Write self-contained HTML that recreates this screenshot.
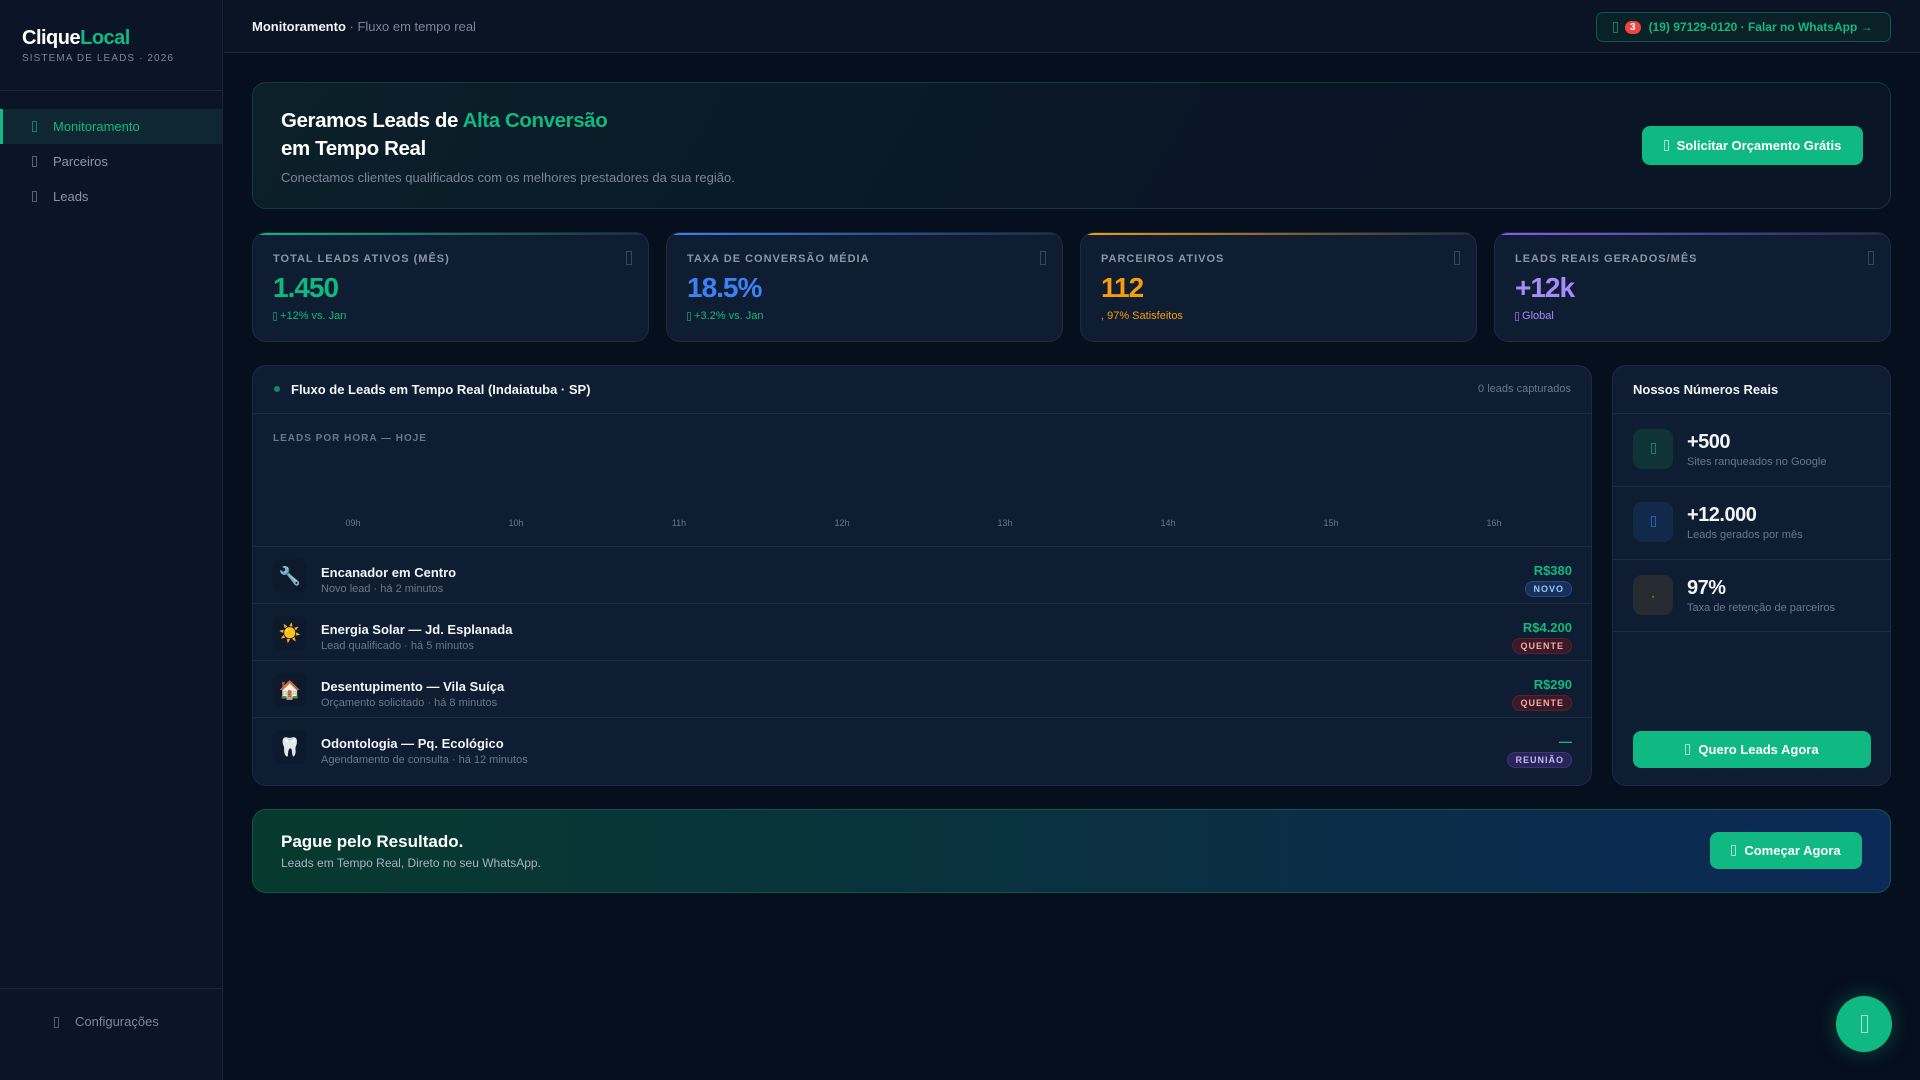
<!DOCTYPE html>
<html><head><meta charset="utf-8"><style>
*{box-sizing:border-box;margin:0;padding:0}
body{width:1920px;height:1080px;background:#060f1e;font-family:"Liberation Sans",sans-serif;color:#e5e7eb;position:relative;overflow:hidden}
.abs{position:absolute}
.tofu{display:inline-block;width:5px;height:11px;border:1px solid currentColor;opacity:.6;vertical-align:middle}
.side{left:0;top:0;width:223px;height:1080px;background:#0b1527;border-right:1px solid #1a263a}
.nav{position:absolute;left:0;width:222px;height:35px;font-size:13px;color:#8b95a7;display:flex;align-items:center}
.nav .tofu{margin-left:32px;margin-right:16px}
.card{background:#0f1d33;border:1px solid #1c2b42;border-radius:14px;position:absolute}
.stat{overflow:hidden}
.stat .lab{position:absolute;left:20px;top:20px;font-size:11px;letter-spacing:1px;color:#8b95a7;font-weight:bold}
.stat .val{position:absolute;left:20px;top:39px;font-size:28px;font-weight:bold;letter-spacing:-1px}
.stat .sub{position:absolute;left:20px;top:77px;font-size:11px}
.stat .ic{position:absolute;right:16px;top:18px;width:6px;height:14px;border:1px solid #3a4658}
.stat .bar{position:absolute;left:0;right:0;top:0;height:2px}
.row{position:absolute;left:0;width:1339px;height:57px;border-top:1px solid #1c2b42}
.row .ib{position:absolute;left:20px;top:12px;width:34px;height:34px;border-radius:8px;background:#0d1a2e;font-size:18px;text-align:center;line-height:34px}
.row .t{position:absolute;left:68px;top:18px;font-size:13px;font-weight:bold;color:#f1f5f9}
.row .s{position:absolute;left:68px;top:36px;font-size:11px;color:#6b7688}
.row .p{position:absolute;right:20px;top:16px;font-size:13px;font-weight:bold;color:#10b981}
.row .b{position:absolute;right:20px;top:34px;font-size:9px;font-weight:bold;letter-spacing:1px;padding:2px 7px;border-radius:9px}
.nr{position:absolute;left:0;width:278px;height:73px;border-top:1px solid #1c2b42}
.nr .ib{position:absolute;left:20px;top:15px;width:40px;height:40px;border-radius:9px;text-align:center;line-height:40px}
.nr .v{position:absolute;left:74px;top:17px;font-size:20px;font-weight:bold;color:#f1f5f9;letter-spacing:-.5px}
.nr .s{position:absolute;left:74px;top:42px;font-size:11px;color:#6b7688}
.hr{position:absolute;top:152px;font-size:9px;color:#6b7688;transform:translateX(-50%)}
.btn{position:absolute;background:#10b981;color:#fff;font-weight:bold;border-radius:8px;display:flex;align-items:center;justify-content:center;font-size:13px}
</style></head><body>
<div class="abs side">
 <div class="abs" style="left:22px;top:27px;font-size:20px;font-weight:bold;letter-spacing:-.5px;color:#fff">Clique<span style="color:#10b981">Local</span></div>
 <div class="abs" style="left:22px;top:53px;font-size:10px;letter-spacing:1.1px;color:#7b8597">SISTEMA DE LEADS · 2026</div>
 <div class="abs" style="left:0;top:90px;width:222px;border-top:1px solid #1a263a"></div>
 <div class="nav" style="top:109px;background:#0f2633;color:#10b981;border-left:3px solid #10b981"><span class="tofu" style="margin-left:29px"></span>Monitoramento</div>
 <div class="nav" style="top:144px"><span class="tofu"></span>Parceiros</div>
 <div class="nav" style="top:179px"><span class="tofu"></span>Leads</div>
 <div class="abs" style="left:0;top:988px;width:222px;border-top:1px solid #1a263a"></div>
 <div class="abs" style="left:54px;top:1014px;font-size:13px;color:#7b8597"><span class="tofu" style="margin-right:16px"></span>Configurações</div>
</div>
<div class="abs" style="left:224px;top:0;width:1696px;height:53px;background:#0a1425;border-bottom:1px solid #1a263a"></div>
<div class="abs" style="left:252px;top:19px;font-size:13px;color:#7b8597"><b style="color:#f1f5f9">Monitoramento</b> · Fluxo em tempo real</div>
<div class="abs" style="left:1596px;top:12px;width:295px;height:30px;border:1px solid #14574a;background:#0a2128;border-radius:7px;font-size:12px;font-weight:bold;color:#10b981;display:flex;align-items:center;padding-left:16px"><span class="tofu" style="margin-right:7px"></span><span style="background:#ef4444;color:#fff;border-radius:8px;font-size:10px;padding:1px 5px;margin-right:8px">3</span>(19) 97129-0120 · Falar no WhatsApp →</div>

<div class="abs" style="left:252px;top:82px;width:1639px;height:127px;border:1px solid #133a3c;border-radius:14px;background:linear-gradient(120deg,#0b2029,#0a1627 60%,#0a1525)"></div>
<div class="abs" style="left:281px;top:107px;font-size:20.5px;font-weight:bold;line-height:28px;color:#fff;letter-spacing:-.4px">Geramos Leads de <span style="color:#10b981">Alta Conversão</span><br>em Tempo Real</div>
<div class="abs" style="left:281px;top:170px;font-size:13px;color:#7b8597">Conectamos clientes qualificados com os melhores prestadores da sua região.</div>
<div class="btn" style="left:1642px;top:126px;width:221px;height:39px"><span class="tofu" style="margin-right:8px"></span>Solicitar Orçamento Grátis</div>

<div class="card stat" style="left:252px;top:232px;width:397px;height:110px"><div class="bar" style="background:linear-gradient(90deg,#10b981,#1c2b42)"></div><div class="lab">TOTAL LEADS ATIVOS (MÊS)</div><div class="val" style="color:#10b981">1.450</div><div class="sub" style="color:#10b981"><span class="tofu" style="height:9px;width:4px"></span> +12% vs. Jan</div><div class="ic"></div></div>
<div class="card stat" style="left:666px;top:232px;width:397px;height:110px"><div class="bar" style="background:linear-gradient(90deg,#3b82f6,#1c2b42)"></div><div class="lab">TAXA DE CONVERSÃO MÉDIA</div><div class="val" style="color:#3b82f6">18.5%</div><div class="sub" style="color:#10b981"><span class="tofu" style="height:9px;width:4px"></span> +3.2% vs. Jan</div><div class="ic"></div></div>
<div class="card stat" style="left:1080px;top:232px;width:397px;height:110px"><div class="bar" style="background:linear-gradient(90deg,#f59e0b,#1c2b42)"></div><div class="lab">PARCEIROS ATIVOS</div><div class="val" style="color:#f59e0b">112</div><div class="sub" style="color:#f59e0b">, 97% Satisfeitos</div><div class="ic"></div></div>
<div class="card stat" style="left:1494px;top:232px;width:397px;height:110px"><div class="bar" style="background:linear-gradient(90deg,#8b5cf6,#1c2b42)"></div><div class="lab">LEADS REAIS GERADOS/MÊS</div><div class="val" style="color:#a78bfa">+12k</div><div class="sub" style="color:#a78bfa"><span class="tofu" style="height:9px;width:4px"></span> Global</div><div class="ic"></div></div>

<div class="card" style="left:252px;top:365px;width:1340px;height:421px;overflow:hidden">
 <div class="abs" style="left:21px;top:20px;width:6px;height:6px;border-radius:50%;background:#10b981;opacity:.7"></div>
 <div class="abs" style="left:38px;top:16px;font-size:13px;font-weight:bold;color:#f1f5f9">Fluxo de Leads em Tempo Real (Indaiatuba · SP)</div>
 <div class="abs" style="right:20px;top:17px;font-size:11px;color:#6b7688">0 leads capturados</div>
 <div class="abs" style="left:0;top:47px;width:1340px;border-top:1px solid #1c2b42"></div>
 <div class="abs" style="left:20px;top:67px;font-size:10px;font-weight:bold;letter-spacing:1px;color:#6b7688">LEADS POR HORA — HOJE</div>
 <div class="hr" style="left:100px">09h</div><div class="hr" style="left:263px">10h</div><div class="hr" style="left:426px">11h</div><div class="hr" style="left:589px">12h</div><div class="hr" style="left:752px">13h</div><div class="hr" style="left:915px">14h</div><div class="hr" style="left:1078px">15h</div><div class="hr" style="left:1241px">16h</div>
 <div class="row" style="top:180px"><div class="ib">🔧</div><div class="t">Encanador em Centro</div><div class="s">Novo lead · há 2 minutos</div><div class="p">R$380</div><div class="b" style="background:#16305a;color:#93c5fd;border:1px solid #1e4a8a">NOVO</div></div>
 <div class="row" style="top:237px"><div class="ib">☀️</div><div class="t">Energia Solar — Jd. Esplanada</div><div class="s">Lead qualificado · há 5 minutos</div><div class="p">R$4.200</div><div class="b" style="background:#3a1a27;color:#fca5a5;border:1px solid #5a2030">QUENTE</div></div>
 <div class="row" style="top:294px"><div class="ib">🏠</div><div class="t">Desentupimento — Vila Suíça</div><div class="s">Orçamento solicitado · há 8 minutos</div><div class="p">R$290</div><div class="b" style="background:#3a1a27;color:#fca5a5;border:1px solid #5a2030">QUENTE</div></div>
 <div class="row" style="top:351px"><div class="ib">🦷</div><div class="t">Odontologia — Pq. Ecológico</div><div class="s">Agendamento de consulta · há 12 minutos</div><div class="p">—</div><div class="b" style="background:#2a2556;color:#c4b5fd;border:1px solid #3b3380">REUNIÃO</div></div>
</div>

<div class="card" style="left:1612px;top:365px;width:279px;height:421px;overflow:hidden">
 <div class="abs" style="left:20px;top:16px;font-size:13px;font-weight:bold;color:#f1f5f9">Nossos Números Reais</div>
 <div class="nr" style="top:47px"><div class="ib" style="background:#0f3337;color:#10b981"><span class="tofu"></span></div><div class="v">+500</div><div class="s">Sites ranqueados no Google</div></div>
 <div class="nr" style="top:120px"><div class="ib" style="background:#13294a;color:#3b82f6"><span class="tofu"></span></div><div class="v">+12.000</div><div class="s">Leads gerados por mês</div></div>
 <div class="nr" style="top:193px;border-bottom:1px solid #1c2b42"><div class="ib" style="background:#252b30;color:#f59e0b;font-size:10px">,</div><div class="v">97%</div><div class="s">Taxa de retenção de parceiros</div></div>
 <div class="btn" style="left:20px;top:365px;width:238px;height:37px"><span class="tofu" style="margin-right:8px"></span>Quero Leads Agora</div>
</div>

<div class="abs" style="left:252px;top:809px;width:1639px;height:84px;border:1px solid #135548;border-radius:14px;background:linear-gradient(90deg,#073a2e,#0a2f44 60%,#0b2a58)"></div>
<div class="abs" style="left:281px;top:832px;font-size:17px;font-weight:bold;color:#fff">Pague pelo Resultado.</div>
<div class="abs" style="left:281px;top:856px;font-size:12px;color:#a7b3c2">Leads em Tempo Real, Direto no seu WhatsApp.</div>
<div class="btn" style="left:1710px;top:832px;width:152px;height:37px"><span class="tofu" style="margin-right:8px"></span>Começar Agora</div>

<div class="abs" style="left:1836px;top:996px;width:56px;height:56px;border-radius:50%;background:#10b981;box-shadow:0 0 20px rgba(16,185,129,.35);display:flex;align-items:center;justify-content:center;color:#fff"><span class="tofu" style="width:7px;height:18px"></span></div>
</body></html>
